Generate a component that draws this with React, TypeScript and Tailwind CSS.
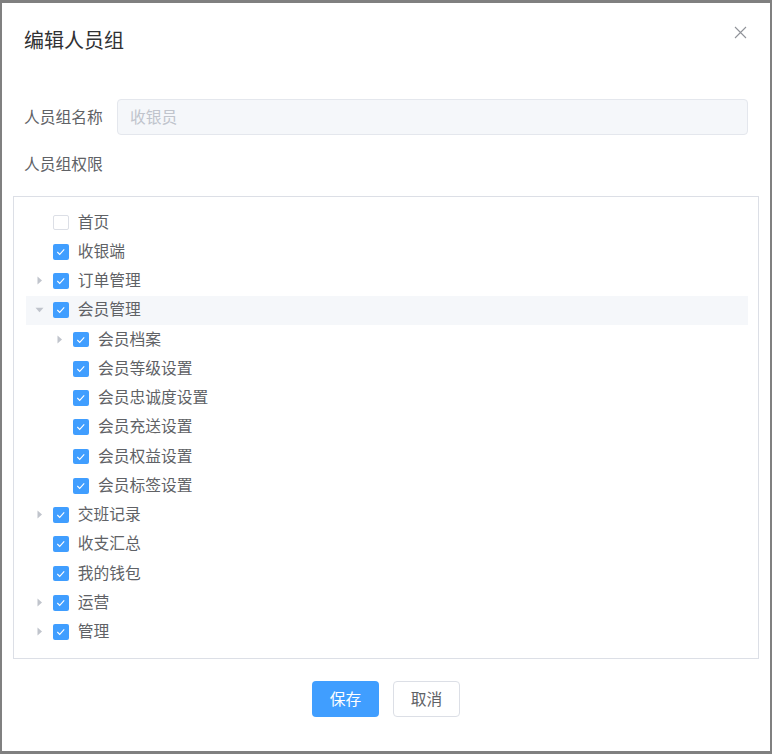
import * as React from "react"

type Node = {
  label: string
  level: 0 | 1
  arrow?: "right" | "down"
  checked: boolean
  active?: boolean
}

const nodes: Node[] = [
  { label: "首页", level: 0, checked: false },
  { label: "收银端", level: 0, checked: true },
  { label: "订单管理", level: 0, arrow: "right", checked: true },
  { label: "会员管理", level: 0, arrow: "down", checked: true, active: true },
  { label: "会员档案", level: 1, arrow: "right", checked: true },
  { label: "会员等级设置", level: 1, checked: true },
  { label: "会员忠诚度设置", level: 1, checked: true },
  { label: "会员充送设置", level: 1, checked: true },
  { label: "会员权益设置", level: 1, checked: true },
  { label: "会员标签设置", level: 1, checked: true },
  { label: "交班记录", level: 0, arrow: "right", checked: true },
  { label: "收支汇总", level: 0, checked: true },
  { label: "我的钱包", level: 0, checked: true },
  { label: "运营", level: 0, arrow: "right", checked: true },
  { label: "管理", level: 0, arrow: "right", checked: true },
]

function Caret({ dir }: { dir?: "right" | "down" }) {
  if (!dir) return null
  if (dir === "right")
    return (
      <svg width="6" height="9" viewBox="0 0 6 9">
        <path d="M0.5 0.5 L5 4.5 L0.5 8.5 Z" fill="#c0c4cc" />
      </svg>
    )
  return (
    <svg width="9" height="6" viewBox="0 0 9 6">
      <path d="M0.5 0.8 L8.5 0.8 L4.5 5.2 Z" fill="#c0c4cc" />
    </svg>
  )
}

function Checkbox({ checked }: { checked: boolean }) {
  if (!checked)
    return <span className="w-[15.75px] h-[15.75px] shrink-0 rounded-[2px] border border-[#dcdfe6] bg-white" />
  return (
    <span className="w-[15.75px] h-[15.75px] shrink-0 rounded-[2px] bg-[#409eff] flex">
      <svg width="16" height="16" viewBox="0 0 16 16">
        <path d="M4.4 8 L6.8 10.4 L11.4 5.3" fill="none" stroke="#fff" strokeWidth="1.1" />
      </svg>
    </span>
  )
}

function TreeRow({ node }: { node: Node }) {
  return (
    <div
      className={
        "h-[29.25px] flex items-center " +
        (node.level === 1 ? "pl-[20.25px] " : "pl-0 ") +
        (node.active ? "bg-[#f5f7fa]" : "")
      }
    >
      <span className="w-[27px] h-full flex items-center justify-center shrink-0">
        <Caret dir={node.arrow} />
      </span>
      <Checkbox checked={node.checked} />
      <span className="ml-[9px] mb-[2px] text-[15.75px] text-[#606266] leading-none">{node.label}</span>
    </div>
  )
}

export default function App() {
  return (
    <div className="w-[772px] h-[754px] bg-[#808080] pt-[3px] pl-[2px] font-['Noto_Sans_CJK_SC','Microsoft_YaHei',sans-serif]">
      <div className="w-[768px] h-[748px] bg-white relative">
        <header className="pt-[23px] pb-[11px] pl-[22px]">
          <h1 className="text-[20px] leading-[27px] text-[#303133]">编辑人员组</h1>
        </header>
        <button className="absolute right-[23px] top-[22.5px] w-[13px] h-[13px]">
          <svg width="13" height="13" viewBox="0 0 13 13">
            <path d="M1 1 L12 12 M12 1 L1 12" stroke="#909399" strokeWidth="1.1" />
          </svg>
        </button>

        <main className="pt-[35px]">
          <div className="flex items-center pl-[22px] pr-[22px]">
            <label className="w-[93px] shrink-0 text-[15.75px] text-[#606266]">人员组名称</label>
            <div className="flex-1 h-[36px] rounded-[4px] border border-[#e4e7ed] bg-[#f5f7fa] flex items-center pl-[12px] text-[15.75px] text-[#c0c4cc]">
              收银员
            </div>
          </div>

          <div className="mt-[11px] h-[36px] flex items-center pl-[22px] text-[15.75px] text-[#606266]">
            人员组权限
          </div>

          <div className="mt-[14px] ml-[11px] w-[746px] border border-[#dcdfe6] pt-[10.75px] pb-[11px] pl-[12px] pr-[10px]">
            {nodes.map((n) => (
              <TreeRow key={n.label} node={n} />
            ))}
          </div>
        </main>

        <footer className="mt-[22.5px] flex justify-center gap-[14px]">
          <button className="w-[67px] h-[36px] rounded-[4px] bg-[#409eff] text-white text-[15.75px]">保存</button>
          <button className="w-[67px] h-[36px] rounded-[4px] border border-[#dcdfe6] bg-white text-[#606266] text-[15.75px]">
            取消
          </button>
        </footer>
      </div>
    </div>
  )
}
